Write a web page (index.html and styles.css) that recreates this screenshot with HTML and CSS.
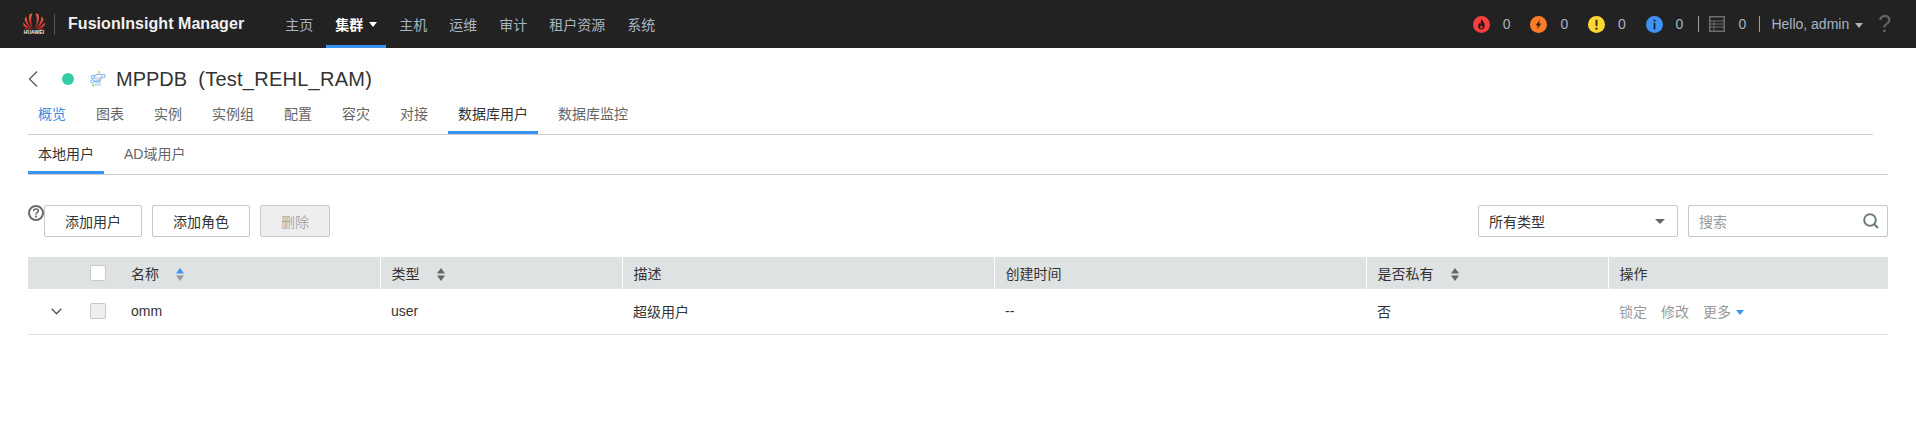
FILE: index.html
```html
<!DOCTYPE html>
<html lang="zh-CN">
<head>
<meta charset="utf-8">
<title>FusionInsight Manager</title>
<link rel="stylesheet" href="styles.css">
</head>
<body>
<header class="topbar">
  <div class="logo">
    <svg class="logo-mark" width="22" height="17" viewBox="0 0 22 17">
      <defs>
        <linearGradient id="petal" x1="0" y1="0" x2="0" y2="1">
          <stop offset="0" stop-color="#f0664e"/>
          <stop offset="1" stop-color="#c4161c"/>
        </linearGradient>
      </defs>
      <g fill="url(#petal)">
        <path d="M10.4 16.5 C8.2 12 7.2 6 9.4 .6 C8 .6 6.6 1.2 6.2 2.4 C5.2 6.4 7.6 12.4 10.4 16.5Z"/>
        <path d="M11.6 16.5 C13.8 12 14.8 6 12.6 .6 C14 .6 15.4 1.2 15.8 2.4 C16.8 6.4 14.4 12.4 11.6 16.5Z"/>
        <path d="M9.8 16.6 C6.6 12.8 3.6 8.6 3.4 3.6 C2 4.6 1.4 6 1.8 7.6 C3 11 6.6 14.4 9.8 16.6Z"/>
        <path d="M12.2 16.6 C15.4 12.8 18.4 8.6 18.6 3.6 C20 4.6 20.6 6 20.2 7.6 C19 11 15.4 14.4 12.2 16.6Z"/>
        <path d="M9 16.4 C5.8 14.8 2.4 12.4 .3 9.6 C0 11 .3 12.6 1.4 13.6 C3.6 15.4 6.4 16 9 16.4Z"/>
        <path d="M13 16.4 C16.2 14.8 19.6 12.4 21.7 9.6 C22 11 21.7 12.6 20.6 13.6 C18.4 15.4 15.6 16 13 16.4Z"/>
        <path d="M8.6 17 C5.8 16.6 3.6 16.4 1.8 15 C2.4 16.4 3.6 17 5 17Z"/>
        <path d="M13.4 17 C16.2 16.6 18.4 16.4 20.2 15 C19.6 16.4 18.4 17 17 17Z"/>
      </g>
    </svg>
    <span class="logo-text">HUAWEI</span>
  </div>
  <span class="logo-sep"></span>
  <span class="product">FusionInsight Manager</span>
  <nav class="mainnav">
    <a class="nav-item">主页</a>
    <a class="nav-item nav-active">集群<i class="caret caret-white"></i></a>
    <a class="nav-item">主机</a>
    <a class="nav-item">运维</a>
    <a class="nav-item">审计</a>
    <a class="nav-item">租户资源</a>
    <a class="nav-item">系统</a>
  </nav>
  <div class="status">
    <span class="alarm">
      <svg width="17" height="17" viewBox="0 0 17 17"><circle cx="8.5" cy="8.5" r="8.5" fill="#f5403f"/><path d="M8.8 3 C9.2 5 11.8 6.6 11.8 9.6 C11.8 12 10.2 13.6 8.4 13.6 C6.4 13.6 5 12 5 10 C5 8.6 5.8 7.6 6.4 6.8 C6.6 7.6 6.9 8 7.4 8.2 C7.6 6.4 7.8 4.4 8.8 3Z M8.4 9.2 C7.8 10 7.2 10.6 7.2 11.2 C7.2 12 7.8 12.4 8.4 12.4 C9.1 12.4 9.6 11.8 9.6 11.2 C9.6 10.6 9 10 8.4 9.2Z" fill="#3a1414" fill-rule="evenodd"/></svg>
      <b class="count">0</b>
    </span>
    <span class="alarm">
      <svg width="17" height="17" viewBox="0 0 17 17"><circle cx="8.5" cy="8.5" r="8.5" fill="#fb7c26"/><path d="M9.8 3.6 L5.6 9.4 H8 L7 13.4 L11.4 7.6 H9 Z" fill="#3a2212"/></svg>
      <b class="count">0</b>
    </span>
    <span class="alarm">
      <svg width="17" height="17" viewBox="0 0 17 17"><circle cx="8.5" cy="8.5" r="8.5" fill="#fdd835"/><rect x="7.5" y="3.4" width="2" height="6.8" rx="1" fill="#3a3214"/><circle cx="8.5" cy="12.6" r="1.2" fill="#3a3214"/></svg>
      <b class="count">0</b>
    </span>
    <span class="alarm alarm-last">
      <svg width="17" height="17" viewBox="0 0 17 17"><circle cx="8.5" cy="8.5" r="8.5" fill="#3f93f5"/><circle cx="8.5" cy="4.6" r="1.1" fill="#14263a"/><rect x="7.6" y="6.8" width="1.8" height="6.6" fill="#14263a"/></svg>
      <b class="count">0</b>
    </span>
    <span class="vsep"></span>
    <svg class="task" width="16" height="16" viewBox="0 0 16 16"><rect x=".75" y=".75" width="14.5" height="14.5" fill="none" stroke="#6e6e6e" stroke-width="1.5"/><path d="M1 5H15M1 8H15M1 11H15M5 5V15" stroke="#6e6e6e" stroke-width="1" fill="none"/></svg>
    <b class="count count-task">0</b>
    <span class="vsep"></span>
    <span class="hello">Hello, admin<i class="caret caret-grey"></i></span>
    <span class="help-q">?</span>
  </div>
</header>

<main class="page">
  <div class="heading">
    <svg class="back" width="10" height="16" viewBox="0 0 10 16"><path d="M9 .5 L1.5 8 L9 15.5" fill="none" stroke="#555" stroke-width="1.2"/></svg>
    <span class="dot"></span>
    <svg class="svc" width="16" height="16" viewBox="0 0 16 16">
      <rect x="5" y="6" width="6" height="9" fill="#cfe2f7"/>
      <g fill="none" stroke="#7db6ee" stroke-width="1.1"><circle cx="3" cy="6" r="1.6"/><circle cx="13.4" cy="5" r="1.8"/><circle cx="2.4" cy="10.4" r="1.6"/><path d="M4.4 5 L7 3.4 H11 M4 10.4 H9 L11.6 6.4"/></g>
      <rect x="8" y="0" width="2" height="2" fill="#f3cf6a"/>
      <rect x="9.6" y="7.4" width="2" height="2" fill="#f0b4b4"/>
      <rect x="2.4" y="13.4" width="2" height="2" fill="#6ddc5e"/>
    </svg>
    <h1 class="title">MPPDB&nbsp; <span class="title-sub">(Test_REHL_RAM)</span></h1>
  </div>

  <div class="tabs">
    <a class="tab tab-link">概览</a>
    <a class="tab">图表</a>
    <a class="tab">实例</a>
    <a class="tab">实例组</a>
    <a class="tab">配置</a>
    <a class="tab">容灾</a>
    <a class="tab">对接</a>
    <a class="tab tab-active">数据库用户</a>
    <a class="tab">数据库监控</a>
  </div>

  <div class="subtabs">
    <a class="subtab subtab-active">本地用户</a>
    <a class="subtab">AD域用户</a>
  </div>

  <div class="toolbar">
    <svg class="help" width="16" height="16" viewBox="0 0 16 16"><circle cx="8" cy="8" r="7" fill="none" stroke="#6b6b6b" stroke-width="2"/><path d="M5.6 6.2 C5.6 4.8 6.7 4 8 4 C9.4 4 10.4 4.8 10.4 6 C10.4 7.4 8 7.6 8 9.4" fill="none" stroke="#6b6b6b" stroke-width="1.6"/><circle cx="8" cy="11.6" r="1.1" fill="#6b6b6b"/></svg>
    <button class="btn btn-wide">添加用户</button>
    <button class="btn btn-wide">添加角色</button>
    <button class="btn btn-disabled" disabled>删除</button>
    <div class="filters">
      <div class="select">所有类型<i class="caret caret-select"></i></div>
      <div class="search">
        <span class="placeholder">搜索</span>
        <svg width="16" height="16" viewBox="0 0 16 16"><circle cx="7" cy="7" r="5.8" fill="none" stroke="#6b7a84" stroke-width="2"/><path d="M11 11 L15 15" stroke="#6b7a84" stroke-width="2.2"/></svg>
      </div>
    </div>
  </div>

  <table class="grid">
    <colgroup>
      <col class="c-exp"><col class="c-chk"><col class="c-name"><col class="c-type"><col class="c-desc"><col class="c-time"><col class="c-priv"><col class="c-op">
    </colgroup>
    <thead>
      <tr>
        <th class="plain"></th>
        <th class="plain"><span class="check"></span></th>
        <th class="plain"><span class="th-label">名称</span><svg class="sort" width="8" height="13" viewBox="0 0 8 13"><path d="M4 0 L8 5.5 H0Z" fill="#3f93f5"/><path d="M4 13 L8 7.5 H0Z" fill="#9a9a9a"/></svg></th>
        <th><span class="th-label">类型</span><svg class="sort" width="8" height="13" viewBox="0 0 8 13"><path d="M4 0 L8 5.5 H0Z" fill="#666"/><path d="M4 13 L8 7.5 H0Z" fill="#666"/></svg></th>
        <th>描述</th>
        <th>创建时间</th>
        <th><span class="th-label">是否私有</span><svg class="sort" width="8" height="13" viewBox="0 0 8 13"><path d="M4 0 L8 5.5 H0Z" fill="#666"/><path d="M4 13 L8 7.5 H0Z" fill="#666"/></svg></th>
        <th>操作</th>
      </tr>
    </thead>
    <tbody>
      <tr>
        <td class="plain expander"><svg width="11" height="7" viewBox="0 0 11 7"><path d="M.7 .7 L5.5 5.7 L10.3 .7" fill="none" stroke="#555" stroke-width="1.3"/></svg></td>
        <td class="plain"><span class="check check-off"></span></td>
        <td class="plain">omm</td>
        <td>user</td>
        <td>超级用户</td>
        <td>--</td>
        <td>否</td>
        <td class="ops"><a>锁定</a><a>修改</a><a>更多<i class="caret caret-blue"></i></a></td>
      </tr>
    </tbody>
  </table>
</main>
</body>
</html>
```
FILE: styles.css
```css
* { box-sizing: border-box; }
html, body { margin: 0; padding: 0; background: #fff; }
body {
  font-family: "Liberation Sans", "Noto Sans CJK SC", sans-serif;
  font-size: 14px;
  color: #333;
  overflow: hidden;
}
.topbar {
  height: 48px;
  background: #222;
  display: flex;
  align-items: center;
  padding-left: 23px;
}
.logo {
  width: 22px;
  height: 22px;
  display: flex;
  flex-direction: column;
  align-items: center;
}
.logo-mark { flex: none; display: block; }
.logo-text {
  font-size: 5px;
  line-height: 5px;
  font-weight: 700;
  color: #eee;
  white-space: nowrap;
  letter-spacing: .1px;
}
.logo-sep {
  width: 1px;
  height: 21px;
  background: #555;
  margin: 0 13px 0 9px;
}
.product {
  font-size: 16px;
  font-weight: 700;
  color: #f0f0f0;
  white-space: nowrap;
  letter-spacing: .05px;
}
.mainnav {
  display: flex;
  height: 48px;
  margin-left: 32px;
}
.nav-item {
  display: flex;
  align-items: center;
  padding: 3px 9px 0;
  margin-right: 4px;
  color: #a9b4c2;
  border-bottom: 3px solid transparent;
  white-space: nowrap;
}
.nav-active {
  color: #fff;
  font-weight: 700;
  border-bottom-color: #3a94f5;
  width: 60px;
}
.caret {
  display: inline-block;
  width: 0;
  height: 0;
  border-left: 4px solid transparent;
  border-right: 4px solid transparent;
  border-top: 5px solid #fff;
  vertical-align: middle;
}
.caret-white { margin-left: 6px; }
.caret-grey { border-top-color: #a9b4c2; margin-left: 6px; }
.caret-select { border-left-width: 5px; border-right-width: 5px; border-top: 5px solid #666; }
.caret-blue { border-top-color: #3a94f5; margin-left: 5px; }
.status {
  margin-left: auto;
  display: flex;
  align-items: center;
  color: #a9b4c2;
  padding-right: 25px;
}
.alarm {
  display: flex;
  align-items: center;
  width: 57.6px;
}
.alarm-last { width: 52px; }
.alarm svg { flex: none; }
.count {
  font-weight: 400;
  margin-left: 13px;
}
.vsep {
  width: 1px;
  height: 16px;
  background: #a0a0a0;
}
.task { margin-left: 10px; }
.count-task { margin-left: 14px; margin-right: 13px; }
.hello { margin-left: 11px; white-space: nowrap; }
.help-q {
  font-size: 23px;
  line-height: 24px;
  color: #666;
  margin-left: 15px;
  font-weight: 400;
}
.page { padding: 0 28px; }
.heading {
  display: flex;
  align-items: center;
  height: 32px;
  margin-top: 15px;
}
.back { flex: none; }
.dot {
  width: 12px;
  height: 12px;
  border-radius: 50%;
  background: #38cca6;
  margin-left: 24px;
}
.svc { margin-left: 16px; }
.title {
  margin: 0 0 0 10px;
  font-size: 20px;
  font-weight: 400;
  color: #333;
  white-space: nowrap;
}
.title-sub { letter-spacing: .25px; }
.tabs {
  display: flex;
  align-items: flex-start;
  height: 33px;
  margin-right: 15px;
  margin-top: 7px;
  border-bottom: 1px solid #ccc;
}
.tab {
  padding: 0 10px;
  margin-right: 10px;
  line-height: 24px;
  height: 32px;
  color: #666;
  white-space: nowrap;
  border-bottom: 3px solid transparent;
}
.tab-link { color: #3a8ee6; }
.tab-active { color: #333; border-bottom-color: #3a94f5; }
.subtabs {
  display: flex;
  align-items: flex-start;
  height: 40px;
  border-bottom: 1px solid #ccc;
}
.subtab {
  padding: 0 10px;
  margin-right: 10px;
  line-height: 38px;
  height: 39px;
  color: #666;
  border-bottom: 3px solid transparent;
  white-space: nowrap;
}
.subtab-active { color: #333; border-bottom-color: #3a94f5; }
.toolbar {
  display: flex;
  align-items: flex-start;
  margin-top: 30px;
  height: 32px;
}
.help { flex: none; }
.btn {
  height: 32px;
  padding: 0;
  margin-right: 10px;
  background: #fff;
  border: 1px solid #c8c8c8;
  border-radius: 2px;
  font: inherit;
  color: #333;
}
.btn-wide { width: 98px; }
.btn-disabled { width: 70px; background: #eee; color: #aaa; }
.filters {
  margin-left: auto;
  display: flex;
  gap: 10px;
}
.select, .search {
  width: 200px;
  height: 32px;
  border: 1px solid #c8c8c8;
  border-radius: 2px;
  display: flex;
  align-items: center;
  justify-content: space-between;
  padding: 0 12px 0 10px;
  background: #fff;
}
.search { padding-right: 8px; }
.placeholder { color: #999; }
.grid {
  width: 1860px;
  table-layout: fixed;
  border-collapse: collapse;
  margin-top: 20px;
}
.c-exp { width: 62px; }
.c-chk { width: 41px; }
.c-name { width: 249px; }
.c-type { width: 242px; }
.c-desc { width: 372px; }
.c-time { width: 372px; }
.c-priv { width: 242px; }
.c-op { width: 280px; }
.grid th {
  height: 32px;
  padding: 0 0 0 11px;
  background: #dfe2e3;
  font-weight: 400;
  text-align: left;
  border-left: 1px solid #fff;
  color: #333;
}
.grid td {
  height: 45px;
  padding: 0 0 0 11px;
  border-bottom: 1px solid #e0e0e0;
  white-space: nowrap;
}
.grid th.plain, .grid td.plain { border-left: 0; padding-left: 0; }
.grid td.expander { padding-left: 23px; }
.expander svg { display: block; }
.check {
  display: block;
  width: 16px;
  height: 16px;
  background: #fff;
  border: 1px solid #c8c8c8;
  border-radius: 2px;
}
.check-off { background: #eee; }
.th-label { margin-right: 17px; }
.sort { vertical-align: -2px; }
.ops a { color: #999; margin-right: 14px; }
.ops .caret { vertical-align: 2px; }
```
